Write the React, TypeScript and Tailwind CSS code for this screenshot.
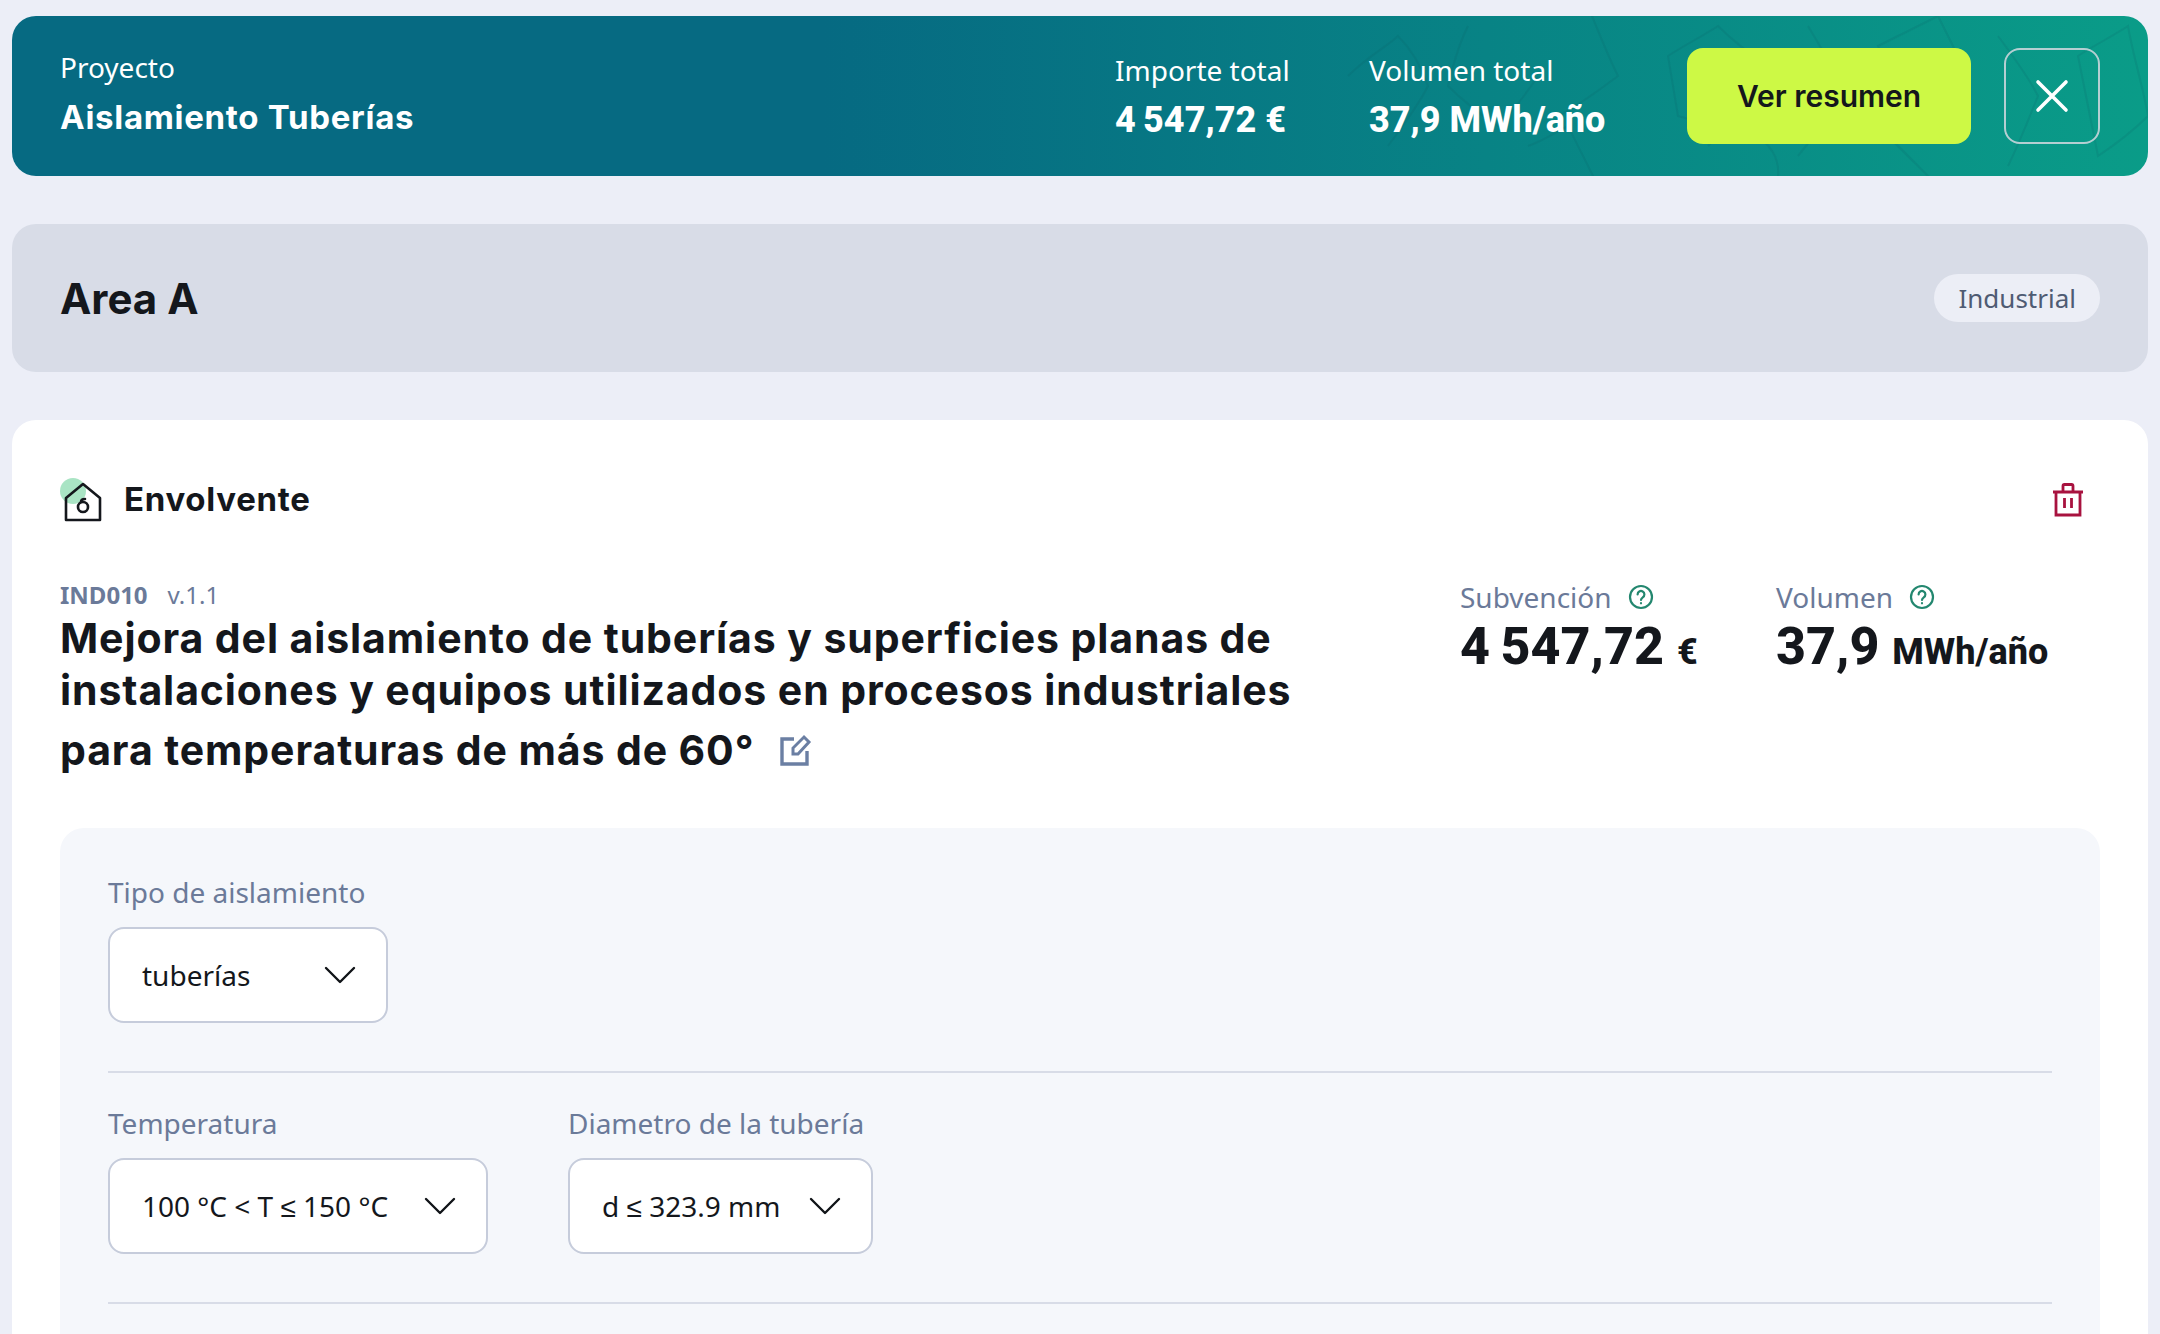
import React from "react";

const body = "font-['Noto_Sans',sans-serif]";
const head = "font-['Inter',sans-serif]";
const num = "font-['Roboto',sans-serif]";

function Chevron() {
  return (
    <svg width="32" height="18" viewBox="0 0 32 18" fill="none" stroke="#111418" strokeWidth="2.4" strokeLinecap="round" strokeLinejoin="round">
      <path d="M2 2l14 14L30 2" />
    </svg>
  );
}

function Select({ label, value, w }: { label: string; value: string; w: string }) {
  return (
    <div className="flex flex-col gap-[17px]">
      <span className={`${body} text-[28px] leading-[36px] text-[#6b7a99]`}>{label}</span>
      <div className={`${w} h-[96px] bg-white rounded-[16px] border-2 border-[#c6ccdb] pl-[32px] pr-[30px] flex items-center justify-between`}>
        <span className={`${body} text-[28px] text-[#14171c] whitespace-nowrap`}>{value}</span>
        <Chevron />
      </div>
    </div>
  );
}

function Help() {
  return (
    <svg width="26" height="26" viewBox="0 0 26 26" fill="none" stroke="#23876f" strokeWidth="2.2" strokeLinecap="round">
      <circle cx="13" cy="13" r="11" />
      <path d="M9.6 10.4a3.4 3.4 0 1 1 5.2 2.9c-1.2.8-1.8 1.4-1.8 2.7" />
      <path d="M13 19.2v.1" />
    </svg>
  );
}

function Pattern() {
  return (
    <svg className="absolute right-0 top-0 h-full w-[860px]" viewBox="0 0 860 160" fill="none" stroke="#0b5f66" strokeOpacity="0.16" strokeWidth="2">
      <path d="M60 60c20-20 40-30 50-40 15 15 25 35 30 50-10 20-25 40-40 60M180 10c-10 20-15 40-20 60 15 15 35 30 50 40 15-15 30-35 40-50M300-10c10 25 20 50 30 70-20 15-40 30-60 40M380 40c15-10 35-20 50-30 15 15 35 30 50 40-10 25-20 50-30 70-20-5-40-15-60-20zM520 10c15 25 30 50 40 70-15 20-35 40-50 60M590 30c20-10 40-20 60-30 10 20 20 40 30 60-20 15-40 30-60 40zM710 20c15 20 30 40 40 60-10 25-20 50-30 70M790 40c15-10 35-20 50-30 5 30 15 60 20 90-15 15-35 30-50 40zM420 130a40 40 0 0 1 70 30M600 120c15 15 35 35 50 50M240 130c15-5 30-15 40-20 10 20 20 40 30 60" />
    </svg>
  );
}

export default function App() {
  return (
    <div className="h-screen overflow-hidden bg-[#eceef7] px-[12px] pt-[16px] flex flex-col gap-[48px]">
      <header className="relative shrink-0 h-[160px] rounded-[24px] overflow-hidden bg-[linear-gradient(90deg,#066a82_0%,#066a82_38%,#0a9c88_100%)] pl-[48px] pr-[48px] flex items-center text-white">
        <Pattern />
        <div className="relative flex flex-col -mt-[4px]">
          <span className={`${body} text-[28px] leading-[38px]`}>Proyecto</span>
          <span className={`${head} font-bold text-[33px] tracking-[0.7px] leading-[46px] mt-[8px]`}>Aislamiento Tuberías</span>
        </div>
        <div className="relative ml-auto flex items-center">
          <div className="flex flex-col w-[254px] mt-[2px]">
            <span className={`${body} text-[28px] leading-[38px]`}>Importe total</span>
            <span className={`${num} font-extrabold text-[36px] leading-[46px] mt-[8px]`}>4&#8201;547,72 €</span>
          </div>
          <div className="flex flex-col w-[318px] mt-[2px]">
            <span className={`${body} text-[28px] leading-[38px]`}>Volumen total</span>
            <span className={`${num} font-extrabold text-[36px] leading-[46px] mt-[8px]`}>37,9 MWh/año</span>
          </div>
          <button className={`${head} w-[284px] h-[96px] rounded-[16px] bg-[#cdf945] text-[#14171c] text-[30px] font-semibold`}>Ver resumen</button>
          <button className="ml-[33px] w-[96px] h-[96px] rounded-[16px] border-2 border-[#b4cfd2] flex items-center justify-center">
            <svg width="34" height="34" viewBox="0 0 34 34" stroke="white" strokeWidth="3.6" strokeLinecap="round"><path d="M3 3l28 28M31 3L3 31" /></svg>
          </button>
        </div>
      </header>

      <section className="shrink-0 h-[148px] rounded-[24px] bg-[#d8dce7] px-[48px] flex items-center justify-between">
        <h2 className={`${head} font-bold text-[42px] text-[#14171c]`}>Area A</h2>
        <span className={`${body} h-[48px] px-[24px] rounded-full bg-[#eceef6] text-[26px] text-[#4f5b73] flex items-center`}>Industrial</span>
      </section>

      <main className="flex-1 rounded-t-[24px] bg-white px-[48px] pt-[56px]">
        <div className="flex items-center justify-between h-[48px]">
          <div className="flex items-center gap-[22px]">
            <svg width="42" height="44" viewBox="0 0 42 44" fill="none">
              <circle cx="13" cy="13" r="13" fill="#a9e4c4" />
              <path d="M6 20L23 6l17 14v22H6z" stroke="#14171c" strokeWidth="2.6" strokeLinejoin="round" />
              <circle cx="23" cy="29" r="5" stroke="#14171c" strokeWidth="2.6" />
              <path d="M21 24c0-2 2-3 4-3" stroke="#14171c" strokeWidth="2.6" strokeLinecap="round" />
            </svg>
            <span className={`${head} font-bold text-[33px] tracking-[0.7px] text-[#14171c]`}>Envolvente</span>
          </div>
          <svg className="mr-[16px]" width="32" height="34" viewBox="0 0 32 34" fill="none" stroke="#a8123f" strokeWidth="2.8">
            <path d="M1 9h30M4 9v23h24V9M11 9V3a1.500 1.500 0 0 1 1.500-1.500h7A1.500 1.500 0 0 1 21 3v6M12.500 15v10M19.500 15v10" />
          </svg>
        </div>

        <div className="flex justify-between mt-[55px]">
          <div className="w-[1300px]">
            <div className={`${body} text-[24px] leading-[32px] text-[#6b7a99]`}>
              <span className="font-bold">IND010</span>
              <span className="ml-[20px]">v.1.1</span>
            </div>
            <h1 className={`${head} font-bold text-[41px] tracking-[0.9px] leading-[52px] text-[#14171c] mt-[1px]`}>
              Mejora del aislamiento de tuberías y superficies planas de
              <br />
              instalaciones y equipos utilizados en procesos industriales
              <br />
              <span className="inline-flex items-center gap-[26px] mt-[8px]">
                para temperaturas de más de 60°
                <svg width="32" height="32" viewBox="0 0 32 32" fill="none" stroke="#6b7fa3" strokeWidth="3.4">
                  <path d="M14 5H2v25h25V17" />
                  <path d="M13 20v-6l11-11 5 5-11 12z" strokeWidth="3" />
                </svg>
              </span>
            </h1>
          </div>
          <div className="flex w-[640px]">
            <div className="w-[316px]">
              <div className="flex items-center gap-[16px]">
                <span className={`${body} text-[28px] leading-[36px] text-[#6b7a99]`}>Subvención</span>
                <Help />
              </div>
              <div className={`${num} font-extrabold text-[#14171c] text-[52px] leading-[60px] mt-[2px] whitespace-nowrap`}>
                4&#8201;547,72 <span className="text-[36px]">€</span>
              </div>
            </div>
            <div>
              <div className="flex items-center gap-[16px]">
                <span className={`${body} text-[28px] leading-[36px] text-[#6b7a99]`}>Volumen</span>
                <Help />
              </div>
              <div className={`${num} font-extrabold text-[#14171c] text-[52px] leading-[60px] mt-[2px] whitespace-nowrap`}>
                37,9 <span className="text-[36px]">MWh/año</span>
              </div>
            </div>
          </div>
        </div>

        <div className="mt-[52px] rounded-t-[24px] bg-[#f5f7fb] px-[48px] pt-[46px] h-[600px]">
          <Select label="Tipo de aislamiento" value="tuberías" w="w-[280px]" />
          <div className="h-[2px] bg-[#d8dce7] mt-[48px] mb-[32px]" />
          <div className="flex gap-[80px]">
            <Select label="Temperatura" value="100 °C < T ≤ 150 °C" w="w-[380px]" />
            <Select label="Diametro de la tubería" value="d ≤ 323.9 mm" w="w-[305px]" />
          </div>
          <div className="h-[2px] bg-[#d8dce7] mt-[48px]" />
        </div>
      </main>
    </div>
  );
}
